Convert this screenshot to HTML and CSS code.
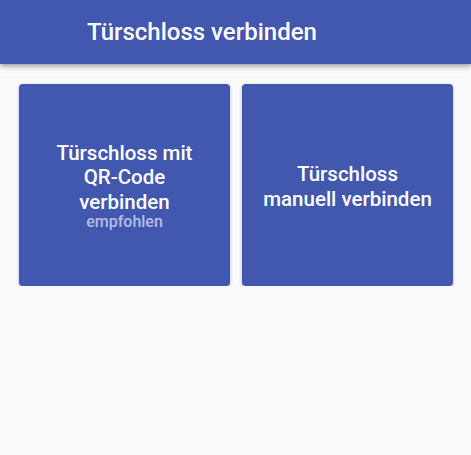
FILE: index.html
```html
<!DOCTYPE html>
<html lang="de">
<head>
<meta charset="utf-8">
<link rel="stylesheet" href="styles.css">
</head>
<body>
<header class="appbar">
  <h1 class="title">Türschloss verbinden</h1>
</header>
<main class="grid">
  <div class="card">
    <div class="card-text">Türschloss mit<br>QR-Code<br>verbinden</div>
    <div class="card-sub">empfohlen</div>
  </div>
  <div class="card">
    <div class="card-text">Türschloss<br>manuell verbinden</div>
  </div>
</main>
</body>
</html>
```
FILE: styles.css
```css
html, body {
  margin: 0;
  padding: 0;
  background: #fafafa;
  font-family: Roboto, "Noto Sans", sans-serif;
}
.appbar {
  height: 64px;
  background: #4257ae;
  display: flex;
  align-items: center;
  padding-left: 87px;
  box-shadow: 0 2px 4px rgba(0,0,0,0.25), 0 4px 6px rgba(0,0,0,0.12);
  position: relative;
  z-index: 1;
}
.title {
  margin: 0;
  color: #fff;
  font-size: 24px;
  font-weight: 500;
}
.grid {
  display: grid;
  grid-template-columns: 211px 211px;
  gap: 12px;
  padding: 20px 18px 0 19px;
}
.card {
  height: 202px;
  background: #4257ae;
  border-radius: 4px;
  box-shadow: 0 1px 3px rgba(0,0,0,0.3);
  display: flex;
  flex-direction: column;
  align-items: center;
  justify-content: center;
  text-align: center;
  color: #fff;
}
.card-text {
  padding-top: 3px;
  font-size: 20.5px;
  font-weight: 500;
  line-height: 24.5px;
}
.card-sub {
  margin-top: -2px;
  font-size: 16px;
  font-weight: 500;
  line-height: 20px;
  color: #b4bce3;
}
```
